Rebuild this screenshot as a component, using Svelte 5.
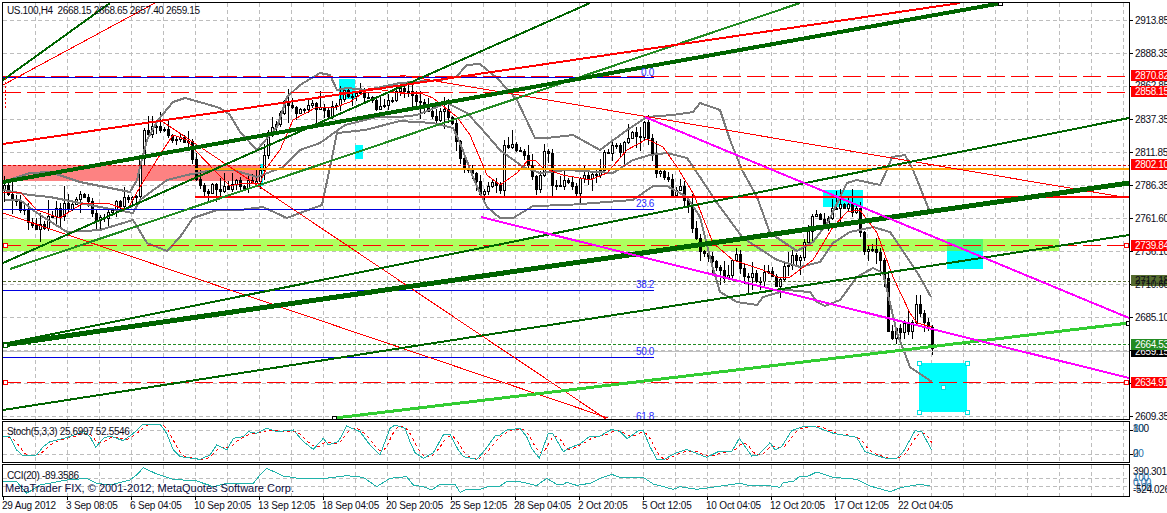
<script>
	// all pane coordinates below are page pixels, each svg's viewBox maps them 1:1
	const gridX = Array.from({ length: 35 }, (_, i) => 35 + 32 * i);
	const mainGrid = [20, 53, 86, 119, 152, 185, 218, 251, 284, 317, 350, 383, 416];

	const rects = [
		{ c: 'pink', x: 3, y: 165, w: 259, h: 16 },
		{ c: 'lime', x: 3, y: 239, w: 1056, h: 12 },
		{ c: 'cyan', x: 339, y: 79, w: 16, h: 20 },
		{ c: 'cyan', x: 355, y: 145, w: 8, h: 14 },
		{ c: 'cyan', x: 260, y: 164, w: 3, h: 22 },
		{ c: 'cyan', x: 823, y: 190, w: 40, h: 17 },
		{ c: 'cyan', x: 947, y: 239, w: 36, h: 30 },
		{ c: 'mix', x: 947, y: 239, w: 36, h: 12 },
		{ c: 'cyan', x: 919, y: 363, w: 48, h: 49 }
	];

	const levels = [
		{ c: 'blue', x1: 3, x2: 654, y: 77.5 },
		{ c: 'red-long', x1: 3, x2: 1129, y: 76.5 },
		{ c: 'red-long', x1: 3, x2: 1129, y: 92.5 },
		{ c: 'red-short', x1: 3, x2: 1129, y: 165.5 },
		{ c: 'orange', x1: 195, x2: 1129, y: 169 },
		{ c: 'red-thick', x1: 195, x2: 1129, y: 197 },
		{ c: 'blue', x1: 3, x2: 654, y: 209.5 },
		{ c: 'red-long', x1: 3, x2: 1129, y: 245.5 },
		{ c: 'olive', x1: 3, x2: 1129, y: 281.5 },
		{ c: 'blue', x1: 3, x2: 654, y: 290.5 },
		{ c: 'green-dash', x1: 3, x2: 1129, y: 344.5 },
		{ c: 'silver', x1: 3, x2: 1129, y: 351 },
		{ c: 'blue', x1: 3, x2: 654, y: 357.5 },
		{ c: 'red-long', x1: 3, x2: 1129, y: 382.5 }
	];

	const trends = [
		{ c: 'thin-red', p: [3, 213, 608, 418] },
		{ c: 'thin-red', p: [160, 120, 606, 419] },
		{ c: 'thin-red', p: [400, 75, 1129, 198] },
		{ c: 'thin-red', p: [3, 85, 155, 3] },
		{ c: 'dark', p: [3, 263, 590, 3] },
		{ c: 'forest', p: [10, 269, 800, 3] },
		{ c: 'dark', p: [3, 80, 110, 3] },
		{ c: 'dark', p: [3, 344, 1129, 118] },
		{ c: 'dark', p: [3, 410, 1129, 235] },
		{ c: 'dark-thick', p: [3, 345, 1129, 183] },
		{ c: 'dark-mid', p: [3, 182, 1002, 3] },
		{ c: 'red-mid', p: [3, 144, 960, 3] },
		{ c: 'light', p: [335, 418, 1129, 323] },
		{ c: 'magenta', p: [481, 217, 1129, 378] },
		{ c: 'magenta', p: [645, 117, 1129, 318] }
	];

	const upper =
		'3,182 30,173 50,172 80,182 130,192 137,180 140,167 147,140 158,120 173,102 185,98 203,103 220,108 230,115 240,132 257,150 263,143 277,127 287,97 300,85 320,73 330,75 337,90 347,88 367,90 400,83 440,80 456,77 467,65 480,64 497,78 517,100 535,138 547,138 573,135 600,150 627,130 647,117 673,115 693,112 700,103 720,110 730,140 742,170 757,197 770,233 797,251 813,242 828,222 847,183 857,180 880,185 887,170 892,157 905,155 913,170 930,212';
	const middle =
		'3,190 30,195 50,197 100,207 133,213 140,200 167,180 187,175 213,170 233,170 257,177 283,167 300,150 320,143 345,125 377,117 400,117 417,115 447,103 467,113 480,127 500,150 523,167 540,173 567,170 597,172 613,173 633,160 650,155 667,153 687,158 700,177 717,203 743,238 777,260 800,267 820,262 833,243 850,232 873,227 890,232 907,257 920,277 931,297';
	const lower =
		'5,200 20,200 37,213 67,232 100,230 133,220 147,243 167,251 180,237 193,218 217,210 240,210 263,207 287,218 300,213 322,205 330,167 337,133 365,130 400,121 433,123 453,128 460,143 473,177 480,193 487,207 500,218 513,218 533,206 567,205 607,202 633,200 653,186 667,186 687,197 700,217 712,265 720,292 737,302 757,305 763,297 787,290 810,292 817,302 825,306 840,300 857,277 873,268 883,273 897,333 910,367 932,382';
	const average =
		'3,192 20,192 37,210 60,218 83,203 107,203 127,210 140,187 163,150 173,135 187,140 195,150 217,173 230,186 243,183 260,183 267,167 280,150 293,120 317,107 333,108 350,102 370,88 400,93 420,93 433,98 457,117 470,135 487,175 500,185 517,173 528,160 535,160 543,168 563,175 590,180 607,173 627,150 647,139 663,147 677,167 693,193 700,210 713,243 733,260 763,270 777,277 790,277 813,260 833,227 847,212 860,210 877,233 893,277 910,313 917,323 932,327';
	const closes =
		'4,190 12,198 25,212 30,228 45,223 50,213 60,212 70,203 80,195 97,217 110,210 127,200 137,192 143,135 147,133 157,130 165,125 175,140 190,145 195,170 197,183 207,190 213,180 222,193 233,180 240,183 253,183 263,167 265,133 272,132 283,103 292,107 305,110 320,106 328,117 338,103 347,90 357,95 367,98 377,108 388,100 400,90 403,87 410,90 415,100 423,103 432,120 440,110 450,115 460,160 467,167 475,177 480,193 488,187 495,183 500,195 503,150 517,148 528,162 532,180 537,192 543,160 547,143 552,190 563,183 575,192 580,173 592,178 600,167 603,150 613,147 623,147 632,137 640,135 645,123 652,152 655,167 667,180 672,192 680,188 687,203 693,230 702,257 710,262 719,267 727,277 735,253 743,278 752,273 759,283 767,265 775,287 783,267 795,258 803,250 815,212 827,223 837,203 847,207 857,210 863,250 872,253 883,265 887,327 892,335 900,327 912,327 915,307 923,313 927,328 932,347';

	function parse(str) {
		return str.split(' ').map((s) => s.split(',').map(Number));
	}

	function at(line, x) {
		for (let i = 1; i < line.length; i++) {
			if (x <= line[i][0]) {
				const [x0, y0] = line[i - 1];
				const [x1, y1] = line[i];
				return y0 + ((y1 - y0) * (x - x0)) / (x1 - x0 || 1);
			}
		}
		return line[line.length - 1][1];
	}

	// fixed seed so the noise on the bars never changes between loads
	let seed = 4711;
	function rnd() {
		seed = (seed * 16807) % 2147483647;
		return seed / 2147483647;
	}

	const closeLine = parse(closes);
	const candles = [];
	let prev = closeLine[0][1];
	for (let x = 4; x <= 932; x += 4) {
		const close = Math.round(at(closeLine, x) + (rnd() - 0.5) * 11);
		const open = prev;
		const top = Math.min(open, close) - Math.round(1 + rnd() * rnd() * 18);
		const bottom = Math.max(open, close) + Math.round(1 + rnd() * rnd() * 18);
		candles.push({ x, open, close, top, bottom, up: close < open });
		prev = close;
	}

	// zoom-crop coordinates (3x) back to page pixels
	function fromCrop(str, ox, oy) {
		return parse(str).map(([x, y]) => [ox + x / 3, oy + y / 3]);
	}
	const toPoints = (line) => line.map((p) => p.join(',')).join(' ');

	const stochLine = [
		...fromCrop(
			'10,110 30,110 50,150 70,168 110,165 130,140 150,125 200,113 250,95 270,110 287,142 310,115 330,108 370,122 400,100 430,72 480,72 500,100 520,150 540,170 600,178 630,165 650,135 680,150 700,115 730,110 745,95 770,100 800,85 830,95 880,90 910,125 940,148 970,115 985,135 1015,125 1040,78 1080,95 1110,135 1140,165 1170,85 1185,75 1200,80',
			0,
			400
		),
		...fromCrop(
			'15,85 30,125 45,158 70,175 100,158 130,105 150,103 175,150 190,170 230,178 255,150 285,108 300,105 320,90 360,85 380,110 395,145 418,175 445,100 458,100 490,155 510,143 540,132 570,108 600,108',
			400,
			400
		),
		...fromCrop(
			'35,88 60,95 82,116 115,92 130,92 150,140 170,178 190,180 225,160 260,148 320,172 355,155 395,155 418,115 455,168 475,165 510,128 525,150 545,140 575,92 615,78 640,78 700,100 770,112 795,155 860,176 890,175 910,155 945,92 965,95 995,150',
			600,
			400
		)
	];
	const cciLine = [
		...fromCrop(
			'10,245 50,245 80,280 120,255 200,240 260,235 290,250 330,255 390,240 410,225 430,203 470,222 520,238 590,243 640,260 680,250 760,250 780,225 800,205 850,228 900,236 970,236 1040,227 1090,232 1130,260 1170,235 1200,232',
			0,
			400
		),
		...fromCrop(
			'20,230 40,255 70,260 95,270 120,253 165,253 180,277 200,268 240,268 270,258 300,258 320,245 360,245 410,257 440,235 470,253 490,253 500,247 530,256 570,250 600,235',
			400,
			400
		),
		...fromCrop(
			'35,223 60,232 130,232 160,252 220,268 240,260 290,268 350,260 420,250 450,257 490,255 540,262 550,247 580,245 600,228 625,228 650,216 700,232 770,238 810,258 870,275 905,262 960,253 990,258',
			600,
			400
		)
	];
	// signal line: 3 bar average of the main line
	const signal = [];
	for (let x = 8; x <= 932; x += 4) {
		const y = (at(stochLine, x) + at(stochLine, x - 4) + at(stochLine, x - 8)) / 3;
		signal.push([x, Math.round(y)]);
	}

	const fibs = [
		{ t: '0.0', x: 641, y: 76 },
		{ t: '23.6', x: 636, y: 207 },
		{ t: '38.2', x: 636, y: 288 },
		{ t: '50.0', x: 636, y: 355 },
		{ t: '61.8', x: 636, y: 420 }
	];

	const handles = [
		{ c: 'red-box', x: 3, y: 243 },
		{ c: 'red-box', x: 3, y: 380 },
		{ c: 'red-box', x: 1124, y: 243 },
		{ c: 'red-box', x: 1124, y: 380 },
		{ c: 'dark-box', x: 332, y: 416 },
		{ c: 'dark-box', x: 1126, y: 321 },
		{ c: 'dark-box', x: 998, y: 1 },
		{ c: 'green-box', x: 3, y: 343 },
		{ c: 'cyan-box', x: 917, y: 361 },
		{ c: 'cyan-box', x: 965, y: 361 },
		{ c: 'cyan-box', x: 917, y: 410 },
		{ c: 'cyan-box', x: 965, y: 410 },
		{ c: 'cyan-box', x: 941, y: 385 }
	];

	const scalePlain = [
		['2913.85', 20], ['2888.35', 53], ['2862.85', 85], ['2837.35', 119], ['2811.85', 152],
		['2786.35', 185], ['2761.60', 218], ['2736.10', 251], ['2710.60', 284], ['2685.10', 317],
		['2609.35', 416]
	];
	const scaleTags = [
		{ t: '2870.82', y: 75, c: 'tag-red' },
		{ t: '2858.15', y: 91, c: 'tag-red' },
		{ t: '2802.10', y: 164, c: 'tag-red' },
		{ t: '2739.84', y: 245, c: 'tag-red' },
		{ t: '2659.15', y: 351, c: 'tag-black' },
		{ t: '2664.53', y: 344, c: 'tag-green' },
		{ t: '2634.91', y: 382, c: 'tag-red' }
	];

	const times = [
		['29 Aug 2012', 3], ['3 Sep 08:05', 67], ['6 Sep 04:05', 131], ['10 Sep 20:05', 195],
		['13 Sep 12:05', 259], ['18 Sep 04:05', 323], ['20 Sep 20:05', 387], ['25 Sep 12:05', 451],
		['28 Sep 04:05', 515], ['2 Oct 20:05', 579], ['5 Oct 12:05', 643], ['10 Oct 04:05', 707],
		['12 Oct 20:05', 771], ['17 Oct 12:05', 835], ['22 Oct 04:05', 899]
	];
</script>

{#snippet verticals(y1, y2)}
	{#each gridX as x}
		<line class="grid" x1={x + 0.5} x2={x + 0.5} {y1} {y2} />
	{/each}
{/snippet}

<div class="terminal">
	<div class="row main-row">
		<svg class="plot" viewBox="3 3 1126 416">
			{#each mainGrid as y}
				<line class="grid" x1="3" x2="1129" y1={y + 0.5} y2={y + 0.5} />
			{/each}
			{@render verticals(3, 419)}

			{#each rects as r}
				<rect class={r.c} x={r.x} y={r.y} width={r.w} height={r.h} />
			{/each}

			{#each candles as k}
				<line class="wick" x1={k.x + 0.5} x2={k.x + 0.5} y1={k.top} y2={k.bottom} />
				<rect
					class={k.up ? 'bar-up' : 'bar-down'}
					x={k.x - 0.5}
					y={Math.min(k.open, k.close) + 0.5}
					width="2"
					height={Math.max(1, Math.abs(k.open - k.close))}
				/>
			{/each}

			<polyline class="band" points={upper} />
			<polyline class="band" points={middle} />
			<polyline class="band" points={lower} />
			<polyline class="avg" points={average} />

			{#each levels as l}
				<line class={l.c} x1={l.x1} x2={l.x2} y1={l.y} y2={l.y} />
			{/each}
			{#each trends as t}
				<line class={t.c} x1={t.p[0]} y1={t.p[1]} x2={t.p[2]} y2={t.p[3]} />
			{/each}
			<line class="red-dots" x1="5.5" x2="5.5" y1="78" y2="110" />

			{#each handles as h}
				<rect class={h.c} x={h.x + 0.5} y={h.y + 0.5} width="4" height="4" />
			{/each}
			{#each fibs as f}
				<text class="fib" x={f.x} y={f.y}>{f.t}</text>
			{/each}
			<text class="label" x="7" y="14">US.100,H4&nbsp; 2668.15 2668.65 2657.40 2659.15</text>
		</svg>
		<svg class="scale" viewBox="1130 2 37 418">
			{#each mainGrid as y}
				<line class="tick" x1="1130" x2="1133" y1={y + 0.5} y2={y + 0.5} />
			{/each}
			<rect class="tag-olive" x="1131" y="275" width="36" height="11" />
			<text class="label" x="1135" y="284">2717.18</text>
			{#each scalePlain as [t, y]}
				<text class="label" x="1135" y={y + 4}>{t}</text>
			{/each}
			{#each scaleTags as s}
				<rect class={s.c} x="1131" y={s.y - 5.5} width="36" height="11" />
				<text class="tag-text" x="1135" y={s.y + 3.5}>{s.t}</text>
			{/each}
		</svg>
	</div>

	<div class="row stoch-row">
		<svg class="plot" viewBox="3 422 1126 40">
			<line class="grid" x1="3" x2="1129" y1="430.5" y2="430.5" />
			<line class="grid" x1="3" x2="1129" y1="454.5" y2="454.5" />
			{@render verticals(422, 462)}
			<polyline class="signal" points={toPoints(signal)} />
			<polyline class="teal" points={toPoints(stochLine)} />
			<text class="label" x="7" y="435">Stoch(5,3,3) 25.6997 52.5546</text>
		</svg>
		<svg class="scale" viewBox="1130 421 37 42">
			<line class="tick" x1="1130" x2="1133" y1="430.5" y2="430.5" />
			<line class="tick" x1="1130" x2="1133" y1="454.5" y2="454.5" />
			<text class="label" x="1133" y="432">100</text>
			<text class="label steel" x="1133" y="432">80</text>
			<text class="label" x="1133" y="457">0</text>
			<text class="label steel" x="1133" y="457">20</text>
		</svg>
	</div>

	<div class="row cci-row">
		<svg class="plot" viewBox="3 465 1126 31">
			<line class="grid" x1="3" x2="1129" y1="478.5" y2="478.5" />
			<line class="grid" x1="3" x2="1129" y1="486.5" y2="486.5" />
			{@render verticals(465, 497)}
			<polyline class="teal" points={toPoints(cciLine)} />
			<text class="label" x="7" y="479">CCI(20) -89.3586</text>
			<text class="label copy" x="5" y="492">MetaTrader FIX, © 2001-2012, MetaQuotes Software Corp.</text>
		</svg>
		<svg class="scale" viewBox="1130 464 37 33">
			<text class="label" x="1133" y="475">390.3015</text>
			<text class="label steel" x="1133" y="481">100</text>
			<text class="label steel" x="1133" y="486">0.00</text>
			<text class="label steel" x="1133" y="491">-100</text>
			<text class="label" x="1133" y="493">-524.0264</text>
		</svg>
	</div>

	<svg class="times" viewBox="0 497 1167 16">
		{#each times as [t, x]}
			<line class="tick" x1={x + 0.5} x2={x + 0.5} y1="497" y2="500" />
			<text class="label" x={x - 1} y="509">{t}</text>
		{/each}
	</svg>
</div>

<style>
	:global(body) {
		margin: 0;
		background: #fff;
	}
	.terminal {
		width: 1167px;
		height: 513px;
		padding: 2px 0 0 2px;
		box-sizing: border-box;
		overflow: hidden;
		display: flex;
		flex-direction: column;
		font-family: 'Liberation Sans', sans-serif;
	}
	.row {
		display: flex;
		flex: none;
	}
	.main-row {
		height: 418px;
		margin-bottom: 1px;
	}
	.stoch-row {
		height: 42px;
		margin-bottom: 1px;
	}
	.cci-row {
		height: 33px;
	}
	svg {
		display: block;
		shape-rendering: crispEdges;
	}
	.plot {
		width: 1126px;
		box-sizing: content-box;
		border: 1px solid #000;
		flex: none;
	}
	.main-row .plot {
		height: 416px;
	}
	.stoch-row .plot {
		height: 40px;
	}
	.cci-row .plot {
		height: 31px;
	}
	.scale {
		width: 37px;
		flex: none;
		height: 100%;
		overflow: hidden;
	}
	.times {
		width: 1167px;
		height: 16px;
		margin-left: -2px;
		flex: none;
	}

	text {
		font-family: 'Liberation Sans', sans-serif;
		font-size: 10px;
		letter-spacing: -0.35px;
		shape-rendering: auto;
		white-space: pre;
	}
	.times text {
		letter-spacing: -0.2px;
	}
	.label {
		fill: #0c0c18;
	}
	.steel {
		fill: #1e6ea8;
	}
	.copy {
		fill: #0a0a3c;
		font-size: 11px;
		letter-spacing: 0;
	}
	.fib {
		fill: #2a2aff;
	}
	.tag-text {
		fill: #fff;
	}

	.grid {
		stroke: #bdbdbd;
		stroke-dasharray: 4 3;
	}
	.tick {
		stroke: #000;
	}

	.pink {
		fill: #fd8282;
	}
	.lime {
		fill: #adff5f;
	}
	.cyan {
		fill: #00ffff;
	}
	.mix {
		fill: #55f76d;
	}

	.wick {
		stroke: #000;
	}
	.bar-up {
		fill: #fff;
		stroke: #000;
	}
	.bar-down {
		fill: #000;
		stroke: #000;
	}

	polyline {
		fill: none;
	}
	.band {
		stroke: #7a7a7a;
		stroke-width: 2;
	}
	.avg {
		stroke: #f00;
	}
	.signal {
		stroke: #f00;
		stroke-dasharray: 3 3;
	}
	.teal {
		stroke: #20b2aa;
	}

	.red-long {
		stroke: #f00;
		stroke-dasharray: 18 6;
	}
	.red-short {
		stroke: #d00;
		stroke-dasharray: 3 2;
	}
	.red-dots {
		stroke: #f00;
		stroke-dasharray: 2 2;
	}
	.blue {
		stroke: #0000e0;
	}
	.orange {
		stroke: #ffa500;
		stroke-width: 2;
	}
	.red-thick {
		stroke: #f00;
		stroke-width: 2;
	}
	.olive {
		stroke: #556b2f;
		stroke-dasharray: 3 2;
	}
	.green-dash {
		stroke: #228b22;
		stroke-dasharray: 3 2;
	}
	.silver {
		stroke: #c0c0c0;
	}

	.thin-red {
		stroke: #f00;
	}
	.dark {
		stroke: #006400;
		stroke-width: 2;
	}
	.dark-mid {
		stroke: #006400;
		stroke-width: 4;
	}
	.dark-thick {
		stroke: #006400;
		stroke-width: 5;
	}
	.forest {
		stroke: #228b22;
		stroke-width: 2;
	}
	.red-mid {
		stroke: #f00;
		stroke-width: 2;
	}
	.light {
		stroke: #32cd32;
		stroke-width: 3;
	}
	.magenta {
		stroke: #f0f;
		stroke-width: 2;
	}

	.red-box {
		fill: #fff;
		stroke: #f00;
	}
	.dark-box {
		fill: #fff;
		stroke: #000;
	}
	.green-box {
		fill: #fff;
		stroke: #006400;
	}
	.cyan-box {
		fill: #fff;
		stroke: #00e0e0;
	}

	.tag-red {
		fill: #f00;
	}
	.tag-olive {
		fill: #556b2f;
	}
	.tag-black {
		fill: #000;
	}
	.tag-green {
		fill: #228b22;
	}
</style>
